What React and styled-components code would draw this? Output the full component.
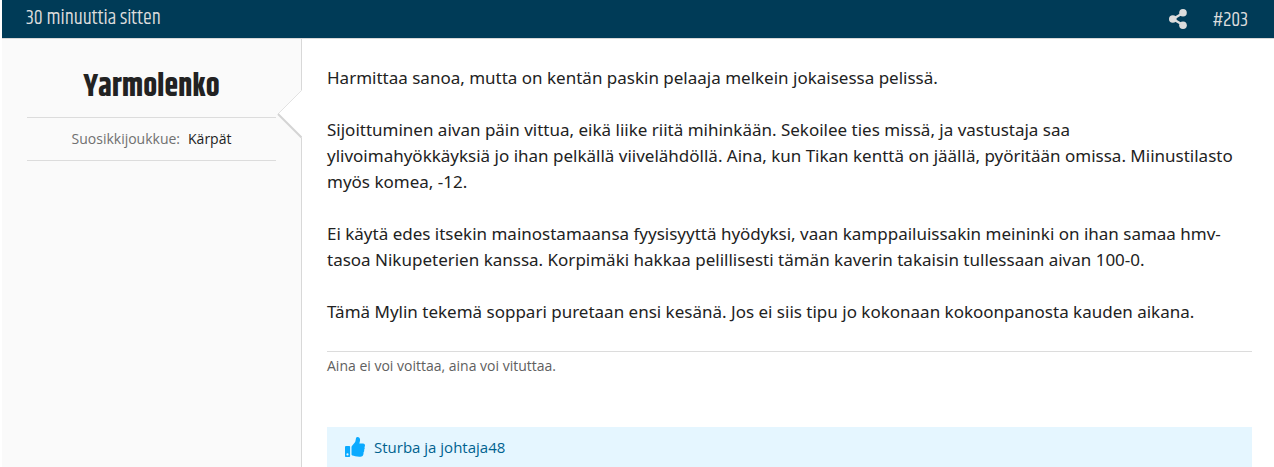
import React from "react";
import styled, { createGlobalStyle } from "styled-components";

const GlobalStyle = createGlobalStyle`
    * {
        box-sizing: border-box;
    }
    body {
        margin: 0;
        background: #fff;
        color: #222;
        font-family: "Open Sans", "Noto Sans", sans-serif;
    }
    a {
        color: inherit;
        text-decoration: none;
    }
`;

const headingFont = `"Khand", "Liberation Sans Narrow", "Roboto Condensed", "Liberation Sans", sans-serif`;

const Post = styled.article`
    margin-left: 2px;
`;

const PostHeader = styled.header`
    display: flex;
    justify-content: space-between;
    height: 39px;
    padding: 0 26px 0 24px;
    background: #003b57;
    border-bottom: 1px solid #d8d8d8;
    color: #dcdcdc;
    font-family: ${headingFont};
    font-size: 20px;
    line-height: 38px;
`;

const HeaderActions = styled.div`
    display: flex;
    align-items: center;
    gap: 26px;
`;

const ShareButton = styled.button`
    display: flex;
    padding: 0;
    border: 0;
    background: none;
    color: inherit;
    cursor: pointer;
`;

const PostNumber = styled.a`
    padding-top: 4px;
`;

const PostInner = styled.div`
    display: flex;
    min-height: 428px;
`;

const UserCell = styled.aside`
    position: relative;
    flex: 0 0 300px;
    padding: 26px 25px 0;
    background: #fafafa;
    border-right: 1px solid #d8d8d8;
    text-align: center;
`;

const UserArrow = styled.svg`
    position: absolute;
    top: 50px;
    right: -1px;
`;

const UserName = styled.h4`
    margin: 0;
    font-family: ${headingFont};
    font-size: 31px;
    font-weight: 700;
    line-height: 44px;
`;

const UserExtras = styled.dl`
    display: flex;
    justify-content: center;
    gap: 8px;
    height: 44px;
    margin: 8px 0 0;
    border-top: 1px solid #dcdcdc;
    border-bottom: 1px solid #dcdcdc;
    font-size: 14px;
    line-height: 42px;

    dt {
        color: #707070;
    }
    dd {
        margin: 0;
    }
`;

const MainCell = styled.div`
    flex: 1;
    min-width: 0;
    padding: 26px 22px 0 25px;
`;

const Message = styled.div`
    font-family: "Noto Sans", "Open Sans", sans-serif;
    font-size: 17px;
    line-height: 26px;

    p {
        margin: 0 0 26px;
    }
`;

const Signature = styled.div`
    padding-top: 4px;
    border-top: 1px solid #dcdcdc;
    color: #606060;
    font-size: 14px;
    line-height: 20px;
`;

const Reactions = styled.div`
    display: flex;
    align-items: center;
    gap: 9px;
    height: 40px;
    margin-top: 51px;
    padding: 0 18px;
    background: #e5f6ff;
    color: #00628f;
    font-size: 15px;
`;

function LikeIcon() {
    return (
        <svg width="20" height="20" viewBox="0 0 20 20" fill="#0aaaff" aria-hidden="true">
            <path
                fillRule="evenodd"
                d="M1 9h3.3a.8.8 0 0 1 .8.8v9.4a.8.8 0 0 1-.8.8H.8a.8.8 0 0 1-.8-.8V10a1 1 0 0 1 1-1ZM2.5 16.3a1.1 1.1 0 1 0 0 2.2 1.1 1.1 0 0 0 0-2.2Z"
            />
            <path d="M6.5 10.1c0-.7.3-1.1.8-1.6l2.3-2.7c.5-.6.7-1.3.9-2.1L11 1.2C11.2.4 11.7 0 12.4 0c1.7 0 2.7 1.2 2.7 3 0 1.2-.5 2.3-.8 3.5h3.8c1.1 0 1.9.9 1.9 1.9 0 .7-.2 1.2-.6 1.6.5.9.4 2.1-.3 2.8.3 1 .1 2-.6 2.7.2 2.8-.8 4.3-4.1 4.3-3.5 0-5.3-1.1-7.1-1.3-.5-.1-.8-.4-.8-.9Z" />
        </svg>
    );
}

function ShareIcon() {
    return (
        <svg width="18" height="20" viewBox="0 0 18 20" fill="currentColor" aria-hidden="true">
            <path d="M4 10 14 4M4 10l10 6" stroke="currentColor" strokeWidth="2.4" />
            <circle cx="3.8" cy="10" r="3.8" />
            <circle cx="14" cy="3.8" r="3.8" />
            <circle cx="14" cy="16.2" r="3.8" />
        </svg>
    );
}

function App() {
    return (
        <>
            <GlobalStyle />
            <Post>
                <PostHeader>
                    <a href="#post-203">
                        <time>30 minuuttia sitten</time>
                    </a>
                    <HeaderActions>
                        <ShareButton type="button" aria-label="Jaa">
                            <ShareIcon />
                        </ShareButton>
                        <PostNumber href="#post-203">#203</PostNumber>
                    </HeaderActions>
                </PostHeader>
                <PostInner>
                    <UserCell>
                        <UserName>
                            <a href="#yarmolenko">Yarmolenko</a>
                        </UserName>
                        <UserExtras>
                            <dt>Suosikkijoukkue:</dt>
                            <dd>Kärpät</dd>
                        </UserExtras>
                        <UserArrow width="25" height="50" viewBox="0 0 25 50" aria-hidden="true">
                            <path d="M25 1 1 25l24 24Z" fill="#fff" />
                            <path d="M24.5 1.5 1 25" fill="none" stroke="#e2e2e2" />
                            <path d="M1 25l23.5 23.5" fill="none" stroke="#d4d4d4" strokeWidth="2" />
                        </UserArrow>
                    </UserCell>
                    <MainCell>
                        <Message>
                            <p>Harmittaa sanoa, mutta on kentän paskin pelaaja melkein jokaisessa pelissä.</p>
                            <p>
                                Sijoittuminen aivan päin vittua, eikä liike riitä mihinkään. Sekoilee ties
                                missä, ja vastustaja saa
                                <br />
                                ylivoimahyökkäyksiä jo ihan pelkällä viivelähdöllä. Aina, kun Tikan kenttä on
                                jäällä, pyöritään omissa. Miinustilasto
                                <br />
                                myös komea, -12.
                            </p>
                            <p>
                                Ei käytä edes itsekin mainostamaansa fyysisyyttä hyödyksi, vaan
                                kamppailuissakin meininki on ihan samaa hmv-tasoa Nikupeterien kanssa.
                                Korpimäki hakkaa pelillisesti tämän kaverin takaisin tullessaan aivan 100-0.
                            </p>
                            <p>
                                Tämä Mylin tekemä soppari puretaan ensi kesänä. Jos ei siis tipu jo kokonaan
                                kokoonpanosta kauden aikana.
                            </p>
                        </Message>
                        <Signature>Aina ei voi voittaa, aina voi vituttaa.</Signature>
                        <Reactions>
                            <LikeIcon />
                            <a href="#reactions">Sturba ja johtaja48</a>
                        </Reactions>
                    </MainCell>
                </PostInner>
            </Post>
        </>
    );
}

export default App;
